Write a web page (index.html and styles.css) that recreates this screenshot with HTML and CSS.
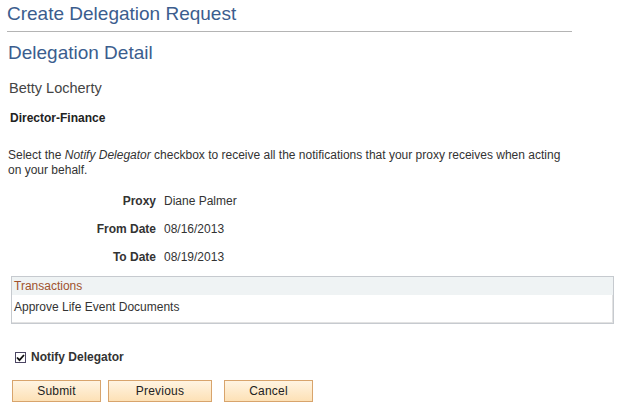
FILE: index.html
```html
<!DOCTYPE html>
<html>
<head>
<meta charset="utf-8">
<link rel="stylesheet" href="styles.css">
</head>
<body>
<div class="page">
  <h1 class="title">Create Delegation Request</h1>
  <h2 class="subtitle">Delegation Detail</h2>
  <div class="name">Betty Locherty</div>
  <div class="job">Director-Finance</div>
  <p class="instr"><span>Select the</span> <i>Notify Delegator</i> <span>checkbox to receive all the notifications that your proxy receives when acting</span> <span>on your behalf.</span></p>
  <div class="fields">
    <div class="lbl">Proxy</div><div class="val">Diane Palmer</div>
    <div class="lbl">From Date</div><div class="val">08/16/2013</div>
    <div class="lbl">To Date</div><div class="val">08/19/2013</div>
  </div>
  <div class="grid">
    <div class="grid-head">Transactions</div>
    <div class="grid-row">Approve Life Event Documents</div>
  </div>
  <label class="notify">
    <span class="cbox"><svg width="9" height="8" viewBox="0 0 9 8"><path d="M1 3.5 L3.5 6.2 L8 1" fill="none" stroke="#111" stroke-width="1.8"/></svg></span>
    <span class="notify-text">Notify Delegator</span>
  </label>
  <div class="buttons">
    <button class="btn btn-submit">Submit</button>
    <button class="btn btn-prev">Previous</button>
    <button class="btn btn-cancel">Cancel</button>
  </div>
</div>
</body>
</html>
```
FILE: styles.css
```css
html, body {
  margin: 0;
  padding: 0;
  background: #ffffff;
}
body {
  font-family: "Liberation Sans", Arial, sans-serif;
  color: #333333;
  font-size: 12px;
}
.page {
  padding-left: 7px;
}
.title {
  margin: 0;
  width: 565px;
  padding-top: 2px;
  padding-bottom: 5px;
  font-size: 19px;
  line-height: 24px;
  font-weight: normal;
  color: #3b5d8e;
  border-bottom: 1px solid #b4b4b4;
}
.subtitle {
  margin: 9px 0 0 1px;
  font-size: 19px;
  line-height: 24px;
  font-weight: normal;
  color: #3b5d8e;
}
.name {
  margin: 14px 0 0 2px;
  font-size: 14.5px;
  line-height: 18px;
  color: #444444;
}
.job {
  margin: 14px 0 0 3px;
  font-weight: bold;
  font-size: 12px;
  line-height: 15px;
  color: #222222;
}
.instr {
  margin: 22px 0 0 1px;
  width: 565px;
  font-size: 12px;
  line-height: 15px;
  color: #333333;
}
.fields {
  margin-top: 16px;
  display: grid;
  grid-template-columns: 149px auto;
  column-gap: 8px;
  row-gap: 13px;
  line-height: 15px;
}
.lbl {
  text-align: right;
  font-weight: bold;
  color: #333333;
}
.val {
  color: #333333;
}
.grid {
  margin: 11px 0 0 4px;
  width: 601px;
  border: 1px solid #c6cacf;
}
.grid-head {
  background: #eff3f4;
  height: 18px;
  line-height: 18px;
  padding-left: 2px;
  color: #a0522d;
}
.grid-row {
  padding: 5px 0 7px 2px;
  line-height: 15px;
  color: #333333;
  border-right: 1px solid #e2e2e2;
  border-bottom: 1px solid #e2e2e2;
}
.notify {
  margin: 26px 0 0 8px;
  display: flex;
  align-items: center;
  gap: 5px;
  line-height: 15px;
}
.cbox {
  width: 9px;
  height: 9px;
  border: 1px solid #4b4563;
  background: #ffffff;
  display: flex;
  align-items: center;
  justify-content: center;
}
.notify-text {
  font-weight: bold;
  color: #333333;
}
.buttons {
  margin: 15px 0 0 5px;
  display: flex;
}
.btn {
  height: 22px;
  padding: 0;
  font-family: "Liberation Sans", Arial, sans-serif;
  font-size: 12px;
  letter-spacing: 0.2px;
  color: #222222;
  border: 1px solid #d8a46c;
  border-radius: 0;
  background: linear-gradient(#fff4e2, #fde1b6);
}
.btn-submit {
  width: 89px;
}
.btn-prev {
  width: 104px;
  margin-left: 7px;
}
.btn-cancel {
  width: 89px;
  margin-left: 12px;
}
```
